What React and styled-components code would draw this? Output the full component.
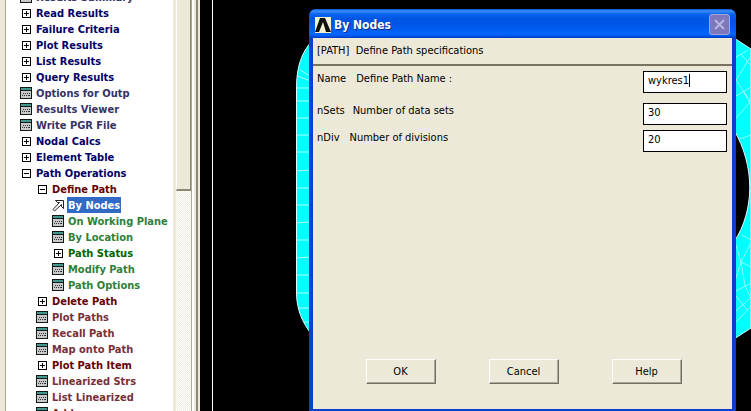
import styled, { createGlobalStyle, css } from "styled-components"

const GlobalStyle = createGlobalStyle`
* {
  box-sizing: border-box;
}
body {
  margin: 0;
  background: #000000;
  font-family: "DejaVu Sans Condensed", "DejaVu Sans", sans-serif;
  font-size: 11px;
}
`

const Page = styled.div`
display: flex;
height: 100vh;
overflow: hidden;
`
const Sidebar = styled.aside`
display: flex;
flex: none;
width: 200px;
padding-left: 5px;
background: #ece9d8;
overflow: hidden;
`
const TreePane = styled.nav`
flex: 1;
min-width: 0;
background: #ffffff;
border-left: 1px solid #aca899;
overflow: hidden;
`
const Tree = styled.ul`
list-style: none;
margin: -11px 0 0;
padding: 0;
`
const Row = styled.li`
display: flex;
align-items: center;
height: 16px;
padding-left: ${(props) => 13 + props.$level * 16}px;
`
const IconSlot = styled.span`
display: flex;
flex: none;
width: 14px;
margin-right: 2px;
justify-content: center;
`
const Toggle = styled.button`
display: flex;
width: 9px;
height: 9px;
padding: 0;
border: 0;
background: none;
`
const Item = styled.a`
height: 16px;
line-height: 17px;
padding: 0 1px;
font-weight: bold;
white-space: nowrap;
text-decoration: none;
color: ${(props) => props.$color};
${(props) =>
    props.$selected &&
    css`
background: #316ac5;
color: #ffffff;
`}
`
const ScrollBar = styled.div`
flex: none;
width: 19px;
border-left: 3px solid #ece9d8;
border-right: 1px solid #aca899;
background: repeating-conic-gradient(#f1efe4 0% 25%, #fdfcf8 0% 50%) 0 0 / 2px 2px;
`
const ScrollThumb = styled.div`
height: 191px;
background: #ece9d8;
border-left: 1px solid #ffffff;
border-right: 1px solid #8a8775;
border-bottom: 2px solid #8a8775;
`
const Splitter = styled.div`
flex: none;
width: 8px;
background: #ece9d8;
border-left: 2px solid #ffffff;
border-right: 2px solid #ece9d8;
box-shadow: inset -2px 0 #8a8775;
`
const Viewport = styled.main`
position: relative;
flex: 1;
min-width: 0;
background: #000000;
`
const Frame = styled.div`
height: 100%;
margin-left: 12px;
border-left: 1px solid #ffffff;
`
const MeshArt = styled.svg`
position: absolute;
top: 0;
left: 0;
width: 551px;
height: 411px;
`
const Dialog = styled.form`
position: absolute;
top: 9px;
right: 15px;
bottom: 0;
left: 109px;
display: flex;
flex-direction: column;
border: 4px solid #0a3fd2;
border-top: 0;
border-bottom-width: 2px;
border-radius: 7px 7px 0 0;
background: #ece9d8;
`
const TitleBar = styled.header`
display: flex;
align-items: center;
flex: none;
height: 29px;
margin: 0 -4px;
padding: 2px 6px 0;
border-radius: 7px 7px 0 0;
background: linear-gradient(#0a50d8 0%, #3c90fa 7%, #0863ee 18%, #0054e0 35%, #0058ea 60%, #0066ff 86%, #0058ee 93%, #0038b8 100%);
`
const Title = styled.h1`
flex: 1;
margin: 0 0 0 3px;
font-size: 12px;
line-height: 16px;
color: #ffffff;
text-shadow: 1px 1px #0a2a88;
`
const CloseButton = styled.button`
display: flex;
align-items: center;
justify-content: center;
width: 21px;
height: 21px;
padding: 0;
border: 1px solid #a9a4dc;
border-radius: 3px;
background: #7d78bc;
`
const Command = styled.p`
flex: none;
height: 28px;
margin: 0;
padding: 0 4px;
line-height: 25px;
border-bottom: 2px solid #77735f;
white-space: pre;
`
const Fields = styled.div`
flex: 1;
padding: 5px 5px 0 4px;
`
const Field = styled.div`
display: flex;
align-items: flex-start;
margin-bottom: ${(props) => props.$space || 5}px;
`
const Label = styled.label`
display: flex;
flex: 1;
gap: ${(props) => props.$gap}px;
line-height: 16px;
`
const TextBoxWrap = styled.span`
position: relative;
display: flex;
`
const TextBox = styled.input`
width: 84px;
height: 22px;
padding: 0 4px 3px;
border: 1px solid #000000;
border-radius: 0;
outline: 0;
background: #ffffff;
font: inherit;
color: #000000;
caret-color: transparent;
`
const Caret = styled.span`
position: absolute;
top: 3px;
left: 46px;
width: 1px;
height: 13px;
background: #000000;
`
const Buttons = styled.footer`
display: flex;
justify-content: center;
gap: 53px;
padding: 0 0 25px 2px;
`
const Button = styled.button`
width: 70px;
height: 25px;
padding: 0;
border: 1px solid;
border-color: #ffffff #716f64 #716f64 #ffffff;
border-radius: 0;
box-shadow: inset -1px -1px #aca899;
background: #ece9d8;
font: inherit;
color: #000000;
`

const NAVY = "#000066"
const SLATE = "#333366"
const MAROON = "#660000"
const ROSE = "#783038"
const GREEN = "#006600"
const LEAF = "#2f8038"

const items = [
    { text: "Results Summary", icon: "form", level: 0, color: SLATE },
    { text: "Read Results", icon: "plus", level: 0, color: NAVY },
    { text: "Failure Criteria", icon: "plus", level: 0, color: NAVY },
    { text: "Plot Results", icon: "plus", level: 0, color: NAVY },
    { text: "List Results", icon: "plus", level: 0, color: NAVY },
    { text: "Query Results", icon: "plus", level: 0, color: NAVY },
    { text: "Options for Outp", icon: "form", level: 0, color: SLATE },
    { text: "Results Viewer", icon: "form", level: 0, color: SLATE },
    { text: "Write PGR File", icon: "form", level: 0, color: SLATE },
    { text: "Nodal Calcs", icon: "plus", level: 0, color: NAVY },
    { text: "Element Table", icon: "plus", level: 0, color: NAVY },
    { text: "Path Operations", icon: "minus", level: 0, color: NAVY },
    { text: "Define Path", icon: "minus", level: 1, color: MAROON },
    { text: "By Nodes", icon: "arrow", level: 2, color: LEAF, selected: true },
    { text: "On Working Plane", icon: "form", level: 2, color: LEAF },
    { text: "By Location", icon: "form", level: 2, color: LEAF },
    { text: "Path Status", icon: "plus", level: 2, color: GREEN },
    { text: "Modify Path", icon: "form", level: 2, color: LEAF },
    { text: "Path Options", icon: "form", level: 2, color: LEAF },
    { text: "Delete Path", icon: "plus", level: 1, color: MAROON },
    { text: "Plot Paths", icon: "form", level: 1, color: ROSE },
    { text: "Recall Path", icon: "form", level: 1, color: ROSE },
    { text: "Map onto Path", icon: "form", level: 1, color: ROSE },
    { text: "Plot Path Item", icon: "plus", level: 1, color: MAROON },
    { text: "Linearized Strs", icon: "form", level: 1, color: ROSE },
    { text: "List Linearized", icon: "form", level: 1, color: ROSE },
    { text: "Add", icon: "form", level: 1, color: ROSE },
]

const FormIcon = () => (
    <svg width="12" height="12" viewBox="0 0 12 12" shapeRendering="crispEdges">
        <rect width="12" height="12" fill="#101818" />
        <rect x="1" y="1" width="10" height="2" fill="#3f9a92" />
        <rect x="1" y="4" width="10" height="7" fill="#c8c8c8" />
        <path d="M3 6.5h1M5 6.5h1M7 6.5h1M9 6.5h1M2 8.5h1M4 8.5h1M6 8.5h1M8 8.5h2" stroke="#303030" />
    </svg>
)

const ArrowIcon = () => (
    <svg width="13" height="13" viewBox="0 0 13 13">
        <path d="M3.5 1.5H11.5V9.5L9.5 7.5V5.5L2.5 12L1 10.5L7.5 3.5H5.5Z" fill="#ffffff" stroke="#282020" />
    </svg>
)

const ToggleIcon = ({ open }) => (
    <svg width="9" height="9" viewBox="0 0 9 9" shapeRendering="crispEdges">
        <rect x="0.5" y="0.5" width="8" height="8" fill="#ffffff" stroke="#000000" />
        <path d={open ? "M2 4.5h5" : "M2 4.5h5M4.5 2v5"} stroke="#000000" />
    </svg>
)

const TreeRow = ({ item }) => (
    <Row $level={item.level}>
        <IconSlot>
            {item.icon === "form" && <FormIcon />}
            {item.icon === "arrow" && <ArrowIcon />}
            {(item.icon === "plus" || item.icon === "minus") && (
                <Toggle type="button" aria-label={item.text} aria-expanded={item.icon === "minus"}>
                    <ToggleIcon open={item.icon === "minus"} />
                </Toggle>
            )}
        </IconSlot>
        <Item href="#" $color={item.color} $selected={item.selected}>{item.text}</Item>
    </Row>
)

const Mesh = () => (
    <MeshArt viewBox="0 0 551 411" aria-hidden="true">
        <path d="M112 41C102 52 96.500 66 96.500 88V294C97 310 102 322 112 335Z" fill="#00ffff" stroke="#d8ffff" />
        <path
            d="M97 76l14 5M96 88h14M96 101h14M96 118h14M96 135h14M96 152h14M96 171l14-1M96 188h14M96 205h14M96 223l14-1M96 240h14M96 258l14-1M96 275h14M96 293h14M99 308h12M104 322h8M100 70l10 6"
            stroke="#b0ffff"
            fill="none"
        />
        <path d="M534 38L551 49V328L534 339Z" fill="#00ffff" stroke="#d8ffff" />
        <path d="M534 130C555 166 555 210 534 242Z" fill="#000000" stroke="#e0ffff" />
        <path
            d="M536 57l12-7M541 54l10 12M551 56L536 80L551 102M536 96l15-9M536 118l15-17M543 91l8 14M540 139l11-4M542 235l9 5M551 243L541 262L536 245M541 262l10 5M541 262l-5 16M541 262l4 24M536 291l15-8M545 286l6 12M536 311l15-14M536 296l12 15M536 322l15-16"
            stroke="#90ffff"
            fill="none"
        />
    </MeshArt>
)

const Logo = () => (
    <svg width="16" height="16" viewBox="0 0 16 16">
        <rect width="16" height="16" fill="#f4f0d0" />
        <path d="M0 15L5 1H10L16 15H11L8 5L4 15Z" fill="#101010" />
    </svg>
)

const App = () => {
    return (
        <Page>
            <GlobalStyle />
            <Sidebar>
                <TreePane>
                    <Tree>
                        {items.map((item) => (
                            <TreeRow key={item.text} item={item} />
                        ))}
                    </Tree>
                </TreePane>
                <ScrollBar>
                    <ScrollThumb />
                </ScrollBar>
                <Splitter />
            </Sidebar>
            <Viewport>
                <Frame />
                <Mesh />
                <Dialog onSubmit={(e) => e.preventDefault()}>
                    <TitleBar>
                        <Logo />
                        <Title>By Nodes</Title>
                        <CloseButton type="button" aria-label="Close">
                            <svg width="13" height="13" viewBox="0 0 13 13">
                                <path d="M2 2L11 11M11 2L2 11" stroke="#b9b6e2" strokeWidth="2" />
                            </svg>
                        </CloseButton>
                    </TitleBar>
                    <Command>{"[PATH]  Define Path specifications"}</Command>
                    <Fields>
                        <Field $space={10}>
                            <Label htmlFor="name" $gap={10}><span>Name</span><span>Define Path Name :</span></Label>
                            <TextBoxWrap>
                                <TextBox id="name" defaultValue="wykres1" />
                                <Caret />
                            </TextBoxWrap>
                        </Field>
                        <Field>
                            <Label htmlFor="nsets" $gap={8}><span>nSets</span><span>Number of data sets</span></Label>
                            <TextBox id="nsets" defaultValue="30" />
                        </Field>
                        <Field>
                            <Label htmlFor="ndiv" $gap={10}><span>nDiv</span><span>Number of divisions</span></Label>
                            <TextBox id="ndiv" defaultValue="20" />
                        </Field>
                    </Fields>
                    <Buttons>
                        <Button type="submit">OK</Button>
                        <Button type="button">Cancel</Button>
                        <Button type="button">Help</Button>
                    </Buttons>
                </Dialog>
            </Viewport>
        </Page>
    )
}

export default App
